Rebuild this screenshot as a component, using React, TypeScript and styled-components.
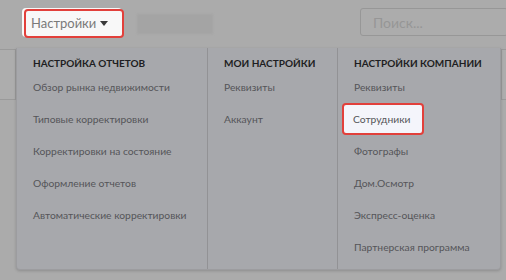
import styled, { createGlobalStyle } from "styled-components";

const GlobalStyle = createGlobalStyle`
  html, body {
    margin: 0;
    padding: 0;
    background: #ababab;
    font-family: Lato, "Noto Sans", sans-serif;
  }
`;

const columns = [
  {
    title: "Настройка отчетов",
    width: 191,
    items: [
      "Обзор рынка недвижимости",
      "Типовые корректировки",
      "Корректировки на состояние",
      "Оформление отчетов",
      "Автоматические корректировки",
    ],
  },
  {
    title: "Мои настройки",
    width: 130,
    items: ["Реквизиты", "Аккаунт"],
  },
  {
    title: "Настройки компании",
    width: 162,
    items: [
      "Реквизиты",
      "Сотрудники",
      "Фотографы",
      "Дом.Осмотр",
      "Экспресс-оценка",
      "Партнерская программа",
    ],
  },
];

const App = () => {
  return (
    <Page>
      <GlobalStyle />
      <TopBar>
        <MenuButton>
          Настройки
          <Caret />
        </MenuButton>
        <Blurred />
        <Search placeholder="Поиск..." />
      </TopBar>

      <Body>
        <SideStub $side="left" />
        <Panel>
          {columns.map((col, ci) => (
            <Column key={col.title} $width={col.width} $last={ci === columns.length - 1}>
              <Heading>{col.title}</Heading>
              {col.items.map(item => (
                <Item key={item} $active={ci === 2 && item === "Сотрудники"}>
                  {item}
                </Item>
              ))}
            </Column>
          ))}
        </Panel>
        <SideStub $side="right" />
      </Body>
    </Page>
  );
};

export default App;

const Page = styled.div`
  width: 506px;
  height: 280px;
  overflow: hidden;
`;

const TopBar = styled.div`
  display: flex;
  align-items: center;
  height: 48px;
  padding-left: 24px;
  box-sizing: border-box;
`;

const MenuButton = styled.div`
  display: flex;
  align-items: center;
  justify-content: space-between;
  flex: 0 0 100px;
  height: 29px;
  box-sizing: border-box;
  padding: 0 14px 1px 5px;
  margin-top: -1px;
  background: #f8f8f8;
  border: 2px solid #e2403b;
  border-radius: 4px;
  box-shadow: -2px -1px 0 0 #f8f8f8;
  color: #7a7a7a;
  font-size: 13px;
`;

const Caret = styled.span`
  width: 0;
  height: 0;
  margin-top: 1px;
  border-left: 4px solid transparent;
  border-right: 4px solid transparent;
  border-top: 5px solid #3a3a3a;
`;

const Blurred = styled.div`
  width: 76px;
  height: 20px;
  margin-left: 13px;
  background: #a4a4a4;
  filter: blur(1px);
`;

const Search = styled.input`
  margin-left: auto;
  width: 148px;
  height: 28px;
  margin-right: -2px;
  margin-top: -4px;
  box-sizing: border-box;
  padding: 0 12px;
  background: #acacac;
  border: 1px solid #979797;
  border-radius: 3px;
  font-family: inherit;
  font-size: 14px;
  outline: none;
  &::placeholder {
    color: #969696;
  }
`;

const Body = styled.div`
  display: flex;
  height: 232px;
`;

const SideStub = styled.div<{ $side: "left" | "right" }>`
  flex: ${p => (p.$side === "left" ? "0 0 16px" : "1")};
  box-sizing: border-box;
  margin-top: 1px;
  height: 51px;
  border: 1px solid #9a9a9a;
  border-${p => p.$side}: none;
  background: #adadad;
`;

const Panel = styled.div`
  display: flex;
  flex: 0 0 483px;
  height: 222px;
  box-sizing: border-box;
  background: #a7a8ac;
  border: 1px solid #9c9c9f;
  border-top: none;
  border-radius: 0 0 4px 4px;
  box-shadow: 0 1px 3px rgba(0, 0, 0, 0.18);
  position: relative;
  z-index: 1;
`;

const Column = styled.div<{ $width: number; $last: boolean }>`
  display: flex;
  flex-direction: column;
  align-items: flex-start;
  width: ${p => p.$width}px;
  box-sizing: border-box;
  padding: 7px 0 0 16px;
  border-right: ${p => (p.$last ? "none" : "1px solid #929295")};
`;

const Heading = styled.div`
  height: 16px;
  line-height: 16px;
  color: #1e1e22;
  font-size: 10px;
  font-weight: 700;
  text-transform: uppercase;
  white-space: nowrap;
`;

const Item = styled.div<{ $active: boolean }>`
  height: 32px;
  line-height: 32px;
  box-sizing: border-box;
  margin-left: -10px;
  padding: 0 10px 0 ${p => (p.$active ? 9 : 10)}px;
  color: #555559;
  font-size: 10.3px;
  white-space: nowrap;
  ${p =>
    p.$active &&
    `
    background: #f4f5fb;
    border: 2px solid #e2403b;
    border-radius: 4px;
    line-height: 28px;
    margin-left: -12px;
    padding: 0 12px 0 9px;
  `}
`;
